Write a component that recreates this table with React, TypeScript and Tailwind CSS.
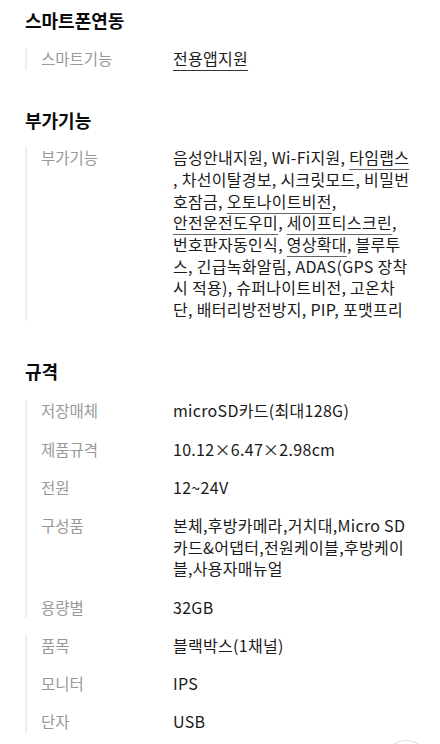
import React from "react";

const U = ({ children }: { children: React.ReactNode }) => (
  <span className="underline decoration-[#666] decoration-1 underline-offset-[5px]">{children}</span>
);

type Row = { label: string; lines: React.ReactNode[] };

function Group({ rows }: { rows: Row[] }) {
  return (
    <div className="flex flex-col gap-[16.5px] border-l-2 border-[#eeeeee]">
      {rows.map((r, i) => (
        <div key={i} className="flex">
          <div className="w-[146px] shrink-0 pl-[14px] text-[15.5px] leading-[21.7px] text-[#999999]">{r.label}</div>
          <div className="flex flex-col text-[16px] leading-[21.7px] tracking-[0.3px] text-[#1a1a1a]">
            {r.lines.map((l, j) => (
              <div key={j} className="whitespace-nowrap">{l}</div>
            ))}
          </div>
        </div>
      ))}
    </div>
  );
}

function Heading({ children }: { children: React.ReactNode }) {
  return <h2 className="text-[18px] font-bold leading-[24px] text-[#0a0a0a]">{children}</h2>;
}

export default function App() {
  return (
    <div
      className="relative h-[744px] w-[440px] overflow-hidden bg-white pl-[25px]"
      style={{ fontFamily: '"Noto Sans CJK KR", "Noto Sans", sans-serif' }}
    >
      <section className="pt-[8px]">
        <Heading>스마트폰연동</Heading>
        <div className="mt-[16px]">
          <Group rows={[{ label: "스마트기능", lines: [<span className="underline decoration-[#333] decoration-1 underline-offset-[5px]">전용앱지원</span>] }]} />
        </div>
      </section>

      <section className="mt-[38.5px]">
        <Heading>부가기능</Heading>
        <div className="mt-[15px]">
          <Group
            rows={[
              {
                label: "부가기능",
                lines: [
                  <>음성안내지원, Wi-Fi지원, <U>타임랩스</U></>,
                  <>, 차선이탈경보, 시크릿모드, 비밀번</>,
                  <>호잠금, <U>오토나이트비전</U>,</>,
                  <><U>안전운전도우미</U>, <U>세이프티스크린</U>,</>,
                  <>번호판자동인식, <U>영상확대</U>, 블루투</>,
                  <>스, 긴급녹화알림, ADAS(GPS 장착</>,
                  <>시 적용), 슈퍼나이트비전, 고온차</>,
                  <>단, 배터리방전방지, PIP, 포맷프리</>,
                ],
              },
            ]}
          />
        </div>
      </section>

      <section className="mt-[38.5px]">
        <Heading>규격</Heading>
        <div className="mt-[17px] flex flex-col gap-[16.5px]">
          <Group
            rows={[
              { label: "저장매체", lines: ["microSD카드(최대128G)"] },
              { label: "제품규격", lines: ["10.12×6.47×2.98cm"] },
              { label: "전원", lines: ["12~24V"] },
              {
                label: "구성품",
                lines: ["본체,후방카메라,거치대,Micro SD", "카드&어댑터,전원케이블,후방케이", "블,사용자매뉴얼"],
              },
              { label: "용량별", lines: ["32GB"] },
            ]}
          />
          <Group
            rows={[
              { label: "품목", lines: ["블랙박스(1채널)"] },
              { label: "모니터", lines: ["IPS"] },
              { label: "단자", lines: ["USB"] },
            ]}
          />
        </div>
      </section>

      <div className="absolute left-[383px] top-[740px] h-[46px] w-[46px] rounded-full border border-[#dddddd] bg-white" />
    </div>
  );
}
